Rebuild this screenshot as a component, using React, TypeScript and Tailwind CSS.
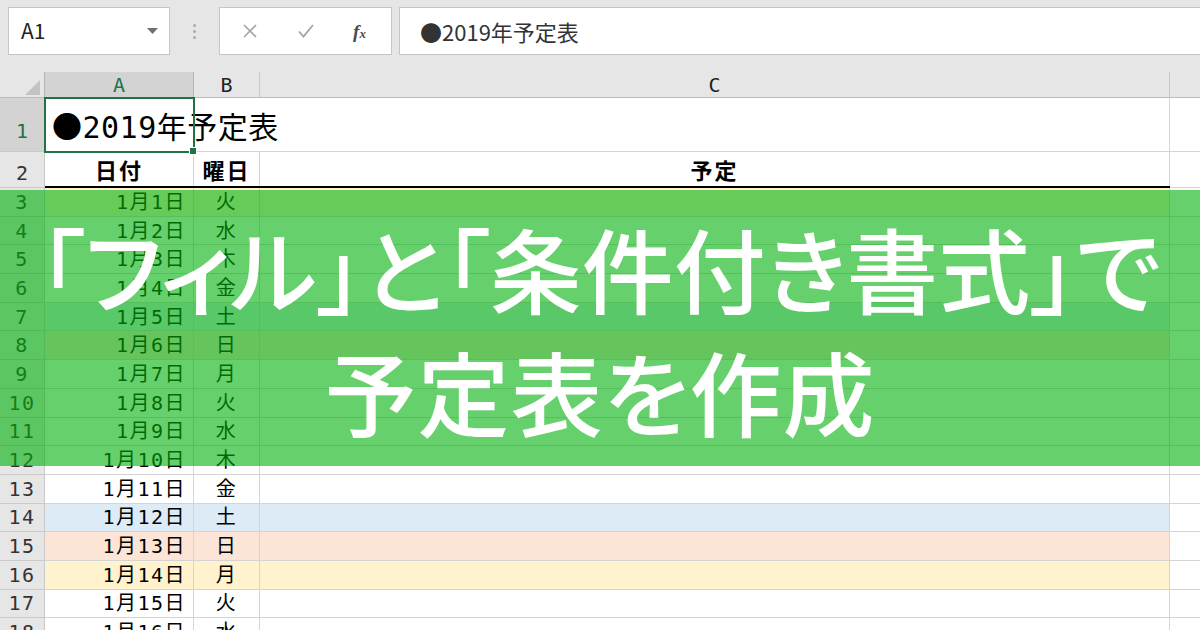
import React from 'react';

type Row = { n: number; date: string; day: string; fill?: string };

const yellow = 'bg-[#fff2cc]';
const blue = 'bg-[#ddebf7]';
const peach = 'bg-[#fce4d6]';

const rows: Row[] = [
  { n: 3, date: '1月1日', day: '火', fill: yellow },
  { n: 4, date: '1月2日', day: '水' },
  { n: 5, date: '1月3日', day: '木' },
  { n: 6, date: '1月4日', day: '金' },
  { n: 7, date: '1月5日', day: '土', fill: blue },
  { n: 8, date: '1月6日', day: '日', fill: peach },
  { n: 9, date: '1月7日', day: '月' },
  { n: 10, date: '1月8日', day: '火' },
  { n: 11, date: '1月9日', day: '水' },
  { n: 12, date: '1月10日', day: '木' },
  { n: 13, date: '1月11日', day: '金' },
  { n: 14, date: '1月12日', day: '土', fill: blue },
  { n: 15, date: '1月13日', day: '日', fill: peach },
  { n: 16, date: '1月14日', day: '月', fill: yellow },
  { n: 17, date: '1月15日', day: '火' },
  { n: 18, date: '1月16日', day: '水' },
];

const cellFont = "font-['DejaVu_Sans_Mono','Noto_Sans_CJK_JP',monospace]";
const jpFont = "font-['Noto_Sans_CJK_JP',sans-serif]";

function FormulaBar() {
  return (
    <div className="flex h-[72px] items-start bg-[#e6e6e6] pl-[8px] pt-[7px]">
      <div className="flex h-[48px] w-[162px] items-center justify-between border border-[#c6c6c6] bg-white pl-[12px] pr-[11px]">
        <span className={`${jpFont} text-[21px] text-[#222]`}>A1</span>
        <svg width="11" height="6" viewBox="0 0 11 6">
          <path d="M0 0h11L5.5 6z" fill="#6f6f6f" />
        </svg>
      </div>
      <div className="flex h-[48px] w-[49px] flex-col items-center justify-center gap-[3px]">
        <span className="h-[3px] w-[3px] rounded-full bg-[#a8a8a8]" />
        <span className="h-[3px] w-[3px] rounded-full bg-[#a8a8a8]" />
        <span className="h-[3px] w-[3px] rounded-full bg-[#a8a8a8]" />
      </div>
      <div className="flex h-[48px] w-[173px] items-center border border-[#c6c6c6] bg-white">
        <div className="flex w-[60px] justify-center">
          <svg width="14" height="14" viewBox="0 0 14 14">
            <path d="M1 1l12 12M13 1L1 13" stroke="#a3a3a3" strokeWidth="1.6" fill="none" />
          </svg>
        </div>
        <div className="flex w-[52px] justify-center">
          <svg width="16" height="14" viewBox="0 0 16 14">
            <path d="M1 7.5l4.5 5L15 1" stroke="#a3a3a3" strokeWidth="1.8" fill="none" />
          </svg>
        </div>
        <div className="flex flex-1 justify-center pr-[4px]">
          <span className="font-['Liberation_Serif',serif] text-[19px] font-bold italic leading-none text-[#4a4a4a]">
            f<span className="text-[13px]">x</span>
          </span>
        </div>
      </div>
      <div className="ml-[7px] flex h-[48px] flex-1 items-center border border-r-0 border-[#c6c6c6] bg-white pl-[20px]">
        <span className={`${jpFont} text-[22px] text-[#333]`}>●2019年予定表</span>
      </div>
    </div>
  );
}

function ColumnHeaders() {
  return (
    <div className={`${cellFont} flex h-[26px] border-b border-[#bcbcbc] bg-[#e6e6e6] text-[20px] leading-none`}>
      <div className="relative w-[45px] shrink-0 border-r border-[#b5b5b5]">
        <svg className="absolute left-[25px] top-[8px]" width="15" height="15" viewBox="0 0 15 15">
          <path d="M15 0v15H0z" fill="#c3c3c3" />
        </svg>
      </div>
      <div className="flex w-[149px] shrink-0 items-center justify-center border-r border-[#b5b5b5] bg-[#d3d3d3] text-[#217346]">
        A
      </div>
      <div className="flex w-[66px] shrink-0 items-center justify-center border-r border-[#c8c8c8] text-[#222]">B</div>
      <div className="flex w-[910px] shrink-0 items-center justify-center border-r border-[#c8c8c8] text-[#222]">C</div>
      <div className="flex-1" />
    </div>
  );
}

function RowHead({ n, active }: { n: number; active?: boolean }) {
  return (
    <div
      className={`flex w-[45px] shrink-0 items-center justify-center border-r border-b border-[#c9c9c9] ${
        active ? 'bg-[#d3d3d3] text-[#217346]' : 'bg-[#e6e6e6] text-[#333]'
      }`}
    >
      {n}
    </div>
  );
}

function DataRow({ r }: { r: Row }) {
  const fill = r.fill ?? '';
  return (
    <div className={`${cellFont} flex h-[28.7px] text-[20px] leading-none tracking-[1.5px]`}>
      <RowHead n={r.n} />
      <div className={`flex w-[149px] shrink-0 items-center justify-end border-r border-b border-[#d4d4d4] pr-[7px] ${fill}`}>
        {r.date}
      </div>
      <div className={`flex w-[66px] shrink-0 items-center justify-center border-r border-b border-[#d4d4d4] ${fill}`}>
        {r.day}
      </div>
      <div className={`w-[910px] shrink-0 border-r border-b border-[#d4d4d4] ${fill}`} />
      <div className="flex-1 border-b border-[#d4d4d4]" />
    </div>
  );
}

function Sheet() {
  return (
    <div className="relative">
      {/* row 1: sheet title spills over B and C */}
      <div className={`${cellFont} flex h-[54px] text-[20px] leading-none`}>
        <div className="flex w-[45px] shrink-0 items-end justify-center border-r border-b border-[#c9c9c9] bg-[#d3d3d3] pb-[10px] text-[#217346]">
          1
        </div>
        <div className="flex w-[1125px] shrink-0 items-end border-r border-b border-[#d4d4d4] pb-[8px] pl-[7px]">
          <span className="whitespace-nowrap text-[30px] tracking-[0.5px] text-black">
            <span className={jpFont}>●</span>2019年予定表
          </span>
        </div>
        <div className="flex-1 border-b border-[#d4d4d4]" />
      </div>

      {/* row 2: table headings */}
      <div className="flex h-[36px]">
        <div className={`${cellFont} flex w-[45px] shrink-0 items-end justify-center border-r border-b border-[#c9c9c9] bg-[#e6e6e6] pb-[4px] text-[20px] leading-none text-[#333]`}>
          2
        </div>
        <div className={`${jpFont} flex border-b-2 border-black text-[22px] font-bold leading-none tracking-[2px]`}>
          <div className="flex w-[149px] shrink-0 items-center justify-center border-r border-[#d4d4d4]">日付</div>
          <div className="flex w-[66px] shrink-0 items-center justify-center border-r border-[#d4d4d4]">曜日</div>
          <div className="flex w-[910px] shrink-0 items-center justify-center border-r border-[#d4d4d4]">予定</div>
        </div>
        <div className="flex-1 border-b border-[#d4d4d4]" />
      </div>

      {rows.map((r) => (
        <DataRow key={r.n} r={r} />
      ))}

      {/* active cell frame around A1 */}
      <div className="pointer-events-none absolute left-[44px] top-[-1px] h-[56px] w-[151px] border-2 border-[#217346]" />
      <div className="absolute left-[189px] top-[49px] h-[8px] w-[8px] border border-white bg-[#217346]" />
    </div>
  );
}

export default function App() {
  return (
    <div className="relative h-[630px] w-[1200px] overflow-hidden bg-white">
      <FormulaBar />
      <ColumnHeaders />
      <Sheet />

      <div className="absolute left-0 right-0 top-[190px] flex h-[276px] flex-col items-center justify-center bg-[#00b10a]/60">
        <div className={`${jpFont} text-center text-[92px] font-medium leading-[123px] text-white [font-feature-settings:'palt']`}>
          <div>「フィル」と「条件付き書式」で</div>
          <div className="tracking-[1px]">予定表を作成</div>
        </div>
      </div>
    </div>
  );
}
